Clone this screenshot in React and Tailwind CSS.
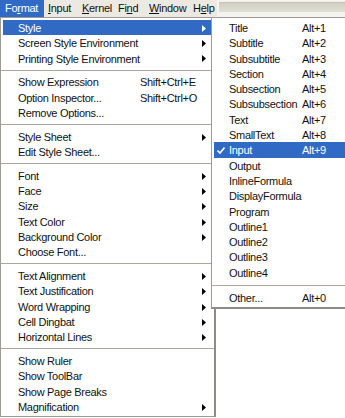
import React from 'react';

const font = { fontFamily: '"Liberation Sans", Arial, sans-serif' };

const mainItems = [
  { label: 'Style', arrow: true, active: true },
  { label: 'Screen Style Environment', arrow: true },
  { label: 'Printing Style Environment', arrow: true },
  { sep: true },
  { label: 'Show Expression', key: 'Shift+Ctrl+E' },
  { label: 'Option Inspector...', key: 'Shift+Ctrl+O' },
  { label: 'Remove Options...' },
  { sep: true },
  { label: 'Style Sheet', arrow: true },
  { label: 'Edit Style Sheet...' },
  { sep: true },
  { label: 'Font', arrow: true },
  { label: 'Face', arrow: true },
  { label: 'Size', arrow: true },
  { label: 'Text Color', arrow: true },
  { label: 'Background Color', arrow: true },
  { label: 'Choose Font...' },
  { sep: true },
  { label: 'Text Alignment', arrow: true },
  { label: 'Text Justification', arrow: true },
  { label: 'Word Wrapping', arrow: true },
  { label: 'Cell Dingbat', arrow: true },
  { label: 'Horizontal Lines', arrow: true },
  { sep: true },
  { label: 'Show Ruler' },
  { label: 'Show ToolBar' },
  { label: 'Show Page Breaks' },
  { label: 'Magnification', arrow: true },
];

const styleItems = [
  { label: 'Title', key: 'Alt+1' },
  { label: 'Subtitle', key: 'Alt+2' },
  { label: 'Subsubtitle', key: 'Alt+3' },
  { label: 'Section', key: 'Alt+4' },
  { label: 'Subsection', key: 'Alt+5' },
  { label: 'Subsubsection', key: 'Alt+6' },
  { label: 'Text', key: 'Alt+7' },
  { label: 'SmallText', key: 'Alt+8' },
  { label: 'Input', key: 'Alt+9', active: true },
  { label: 'Output' },
  { label: 'InlineFormula' },
  { label: 'DisplayFormula' },
  { label: 'Program' },
  { label: 'Outline1' },
  { label: 'Outline2' },
  { label: 'Outline3' },
  { label: 'Outline4' },
  { sep: true },
  { label: 'Other...', key: 'Alt+0' },
];

// menu bar titles, each with its own box width so the labels land where the screenshot has them
const menuBar = [
  { pre: 'Fo', u: 'r', post: 'mat', active: true, cls: 'w-[44px] pl-[5px]' },
  { pre: '', u: 'I', post: 'nput', cls: 'w-[34px] pl-[4px]' },
  { pre: '', u: 'K', post: 'ernel', cls: 'w-[36px] pl-[4px]' },
  { pre: 'Fi', u: 'n', post: 'd', cls: 'w-[31px] pl-[4px]' },
  { pre: '', u: 'W', post: 'indow', cls: 'w-[44px] pl-[4px]' },
  { pre: 'H', u: 'e', post: 'lp', cls: 'flex-1 pl-[4px]' },
];

const Arrow = ({ white }) => (
  <svg width="4" height="7" viewBox="0 0 4 7">
    <path d="M0 0 L4 3.5 L0 7 Z" fill={white ? '#fff' : '#000'} />
  </svg>
);

const Check = () => (
  <svg width="8" height="7" viewBox="0 0 8 7">
    <path d="M0.5 3.5 L3 6 L7.5 0.5" stroke="#fff" strokeWidth="1.6" fill="none" />
  </svg>
);

export default function App() {
  return (
    <div className="relative w-[345px] h-[418px] overflow-hidden bg-white text-[11px] tracking-[-0.3px] text-[#111]" style={font}>
      {/* menu bar */}
      <div className="flex h-[17px]">
        <div className="flex w-[217px] bg-[#ebe9e1]">
          {menuBar.map((m, i) => (
            <div
              key={i}
              className={`flex items-center whitespace-nowrap ${m.cls} ${m.active ? 'bg-[#316ac5] text-white' : ''}`}
            >
              {m.pre}
              <span className="underline underline-offset-[1px]">{m.u}</span>
              {m.post}
            </div>
          ))}
        </div>
        <div className="flex-1 bg-[#f4f3ee] pt-[2px] pl-[2px]">
          <div className="h-[10px] bg-gradient-to-b from-[#d1cec4] to-[#e2dfd4] border-t border-[#c6c3b6]" />
        </div>
      </div>

      {/* Format menu */}
      <div className="w-[216px] border border-[#9d9b93] border-r-[2px] border-r-[#8e8c85] bg-white p-[2px]">
        {mainItems.map((it, i) =>
          it.sep ? (
            <div key={i} className="h-[8.5px] flex items-center -mx-[2px]">
              <div className="h-px w-full bg-[#aca899]" />
            </div>
          ) : (
            <div
              key={i}
              className={`h-[15.3px] grid grid-cols-[15px_122px_1fr_10px] items-center ${
                it.active ? 'bg-[#316ac5] text-white' : ''
              }`}
            >
              <span />
              <span className="whitespace-nowrap">{it.label}</span>
              <span className="whitespace-nowrap">{it.key}</span>
              <span className="flex items-center">{it.arrow && <Arrow white={it.active} />}</span>
            </div>
          )
        )}
      </div>

      {/* Style submenu, opened over the right edge of the Format menu */}
      <div className="absolute left-[211px] top-[17px] w-[140px] border border-[#9d9b93] border-b-[2px] border-b-[#8e8c85] bg-white py-[2px] pl-[2px]">
        {styleItems.map((it, i) =>
          it.sep ? (
            <div key={i} className="h-[10px] flex items-center -ml-[2px]">
              <div className="h-px w-full bg-[#aca899]" />
            </div>
          ) : (
            <div
              key={i}
              className={`h-[15.3px] grid grid-cols-[15px_73px_1fr] items-center ${
                it.active ? 'bg-[#316ac5] text-white' : ''
              }`}
            >
              <span className="flex justify-center pr-[2px]">{it.active && <Check />}</span>
              <span className="whitespace-nowrap">{it.label}</span>
              <span className="whitespace-nowrap">{it.key}</span>
            </div>
          )
        )}
      </div>
    </div>
  );
}
